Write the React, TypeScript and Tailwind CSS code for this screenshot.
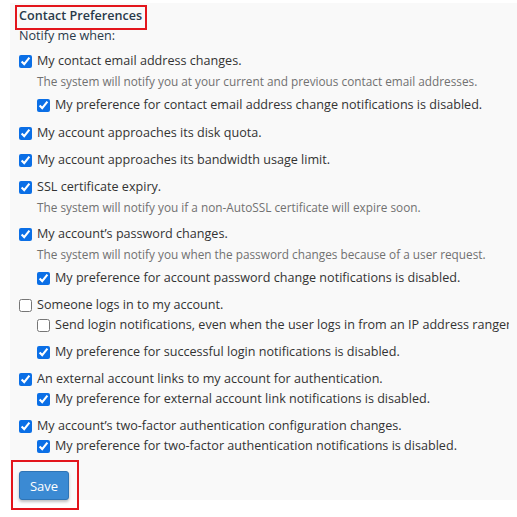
import React from "react";

type Sub = { label: string; checked: boolean; clip?: boolean };
type Item = { label: string; checked: boolean; help?: string; subs?: Sub[]; pad?: boolean };

const items: Item[] = [
  {
    label: "My contact email address changes.",
    checked: true,
    help: "The system will notify you at your current and previous contact email addresses.",
    subs: [{ label: "My preference for contact email address change notifications is disabled.", checked: true }],
    pad: true,
  },
  { label: "My account approaches its disk quota.", checked: true },
  { label: "My account approaches its bandwidth usage limit.", checked: true },
  {
    label: "SSL certificate expiry.",
    checked: true,
    help: "The system will notify you if a non-AutoSSL certificate will expire soon.",
  },
  {
    label: "My account\u2019s password changes.",
    checked: true,
    help: "The system will notify you when the password changes because of a user request.",
    subs: [{ label: "My preference for account password change notifications is disabled.", checked: true }],
  },
  {
    label: "Someone logs in to my account.",
    checked: false,
    subs: [
      {
        label: "Send login notifications, even when the user logs in from an IP address ranger",
        checked: false,
        clip: true,
      },
      { label: "My preference for successful login notifications is disabled.", checked: true },
    ],
  },
  {
    label: "An external account links to my account for authentication.",
    checked: true,
    subs: [{ label: "My preference for external account link notifications is disabled.", checked: true }],
  },
  {
    label: "My account\u2019s two-factor authentication configuration changes.",
    checked: true,
    subs: [{ label: "My preference for two-factor authentication notifications is disabled.", checked: true }],
  },
];

function Box({ checked }: { checked: boolean }) {
  return (
    <input
      type="checkbox"
      defaultChecked={checked}
      className="m-0 h-[13px] w-[13px] shrink-0 accent-[#0b6fe6]"
    />
  );
}

export default function App() {
  return (
    <div className="min-h-[517px] w-[517px] overflow-hidden bg-white pt-[3px] font-['Open_Sans',sans-serif] text-[12.6px] leading-[20px] text-[#333]">
      <div className="ml-[10px] bg-[#f9f9f9] pl-[9px] pt-[3px]">
        <div className="relative inline-block font-semibold text-[#293a4a]">
          Contact Preferences
          <span className="pointer-events-none absolute left-[-4px] top-[-1px] h-[25px] w-[132px] border-2 border-[#e3151c]" />
        </div>
        <div className="text-[#293a4a]">Notify me when:</div>

        <div className="mt-[5px] flex flex-col gap-[7px]">
          {items.map((it) => (
            <div key={it.label} className={it.pad ? "pb-px" : ""}>
              <label className="flex items-center gap-[5px]">
                <Box checked={it.checked} />
                <span>{it.label}</span>
              </label>
              {it.help && (
                <div className="pl-[18px] text-[11.8px] text-[#717171]">{it.help}</div>
              )}
              {it.subs && (
                <div className={`flex flex-col gap-[7px] pl-[18px] ${it.help ? "mt-1" : ""}`}>
                  {it.subs.map((s) => (
                    <label
                      key={s.label}
                      className={`flex items-center gap-[5px] ${s.clip ? "w-[472px] overflow-hidden whitespace-nowrap" : ""}`}
                    >
                      <Box checked={s.checked} />
                      <span>{s.label}</span>
                    </label>
                  ))}
                </div>
              )}
            </div>
          ))}
        </div>

        <div className="relative mt-[15px] inline-block">
          <button className="h-[29px] w-[50px] rounded-[3px] border border-[#2f74b5] bg-[#3b8ad3] text-[13px] text-white shadow-[0_2px_3px_rgba(0,0,0,0.25)]">
            Save
          </button>
          <span className="pointer-events-none absolute left-[-8px] top-[-11px] h-[50px] w-[68px] border-2 border-[#e3151c]" />
        </div>
      </div>
    </div>
  );
}
